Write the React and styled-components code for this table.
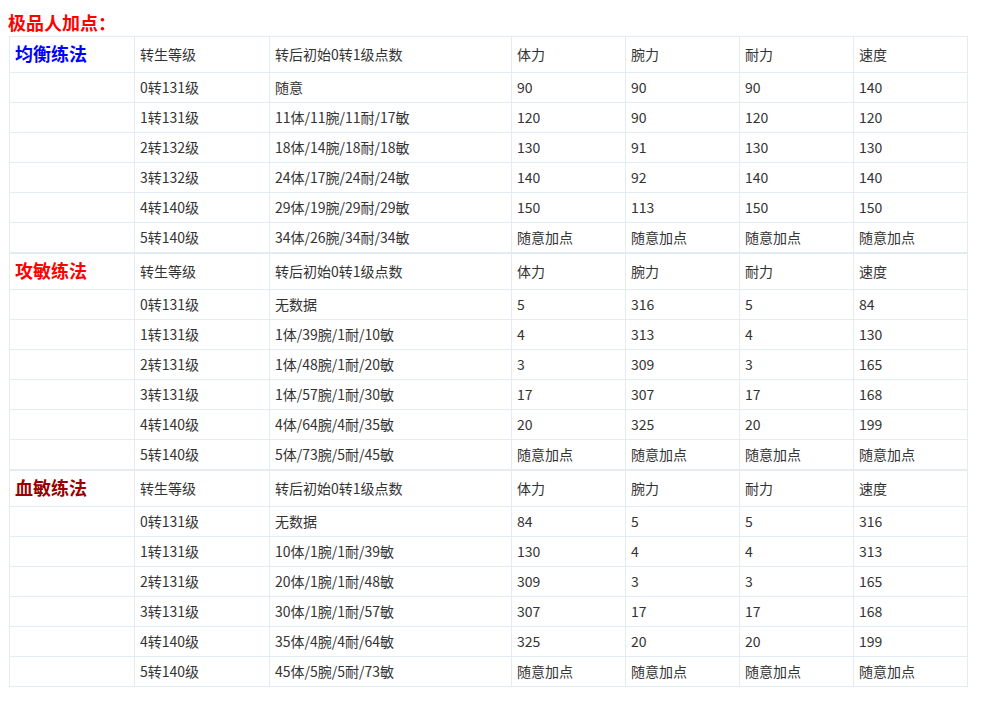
import React from 'react'
import styled, { createGlobalStyle } from 'styled-components'

const GlobalStyle = createGlobalStyle`
  body {
    margin: 8px;
    background: #ffffff;
    font-family: "Noto Sans CJK SC", "Microsoft YaHei", sans-serif;
    color: #333333;
  }
`

const Title = styled.h3`
  margin: 0;
  font-size: 18px;
  line-height: 28px;
  font-weight: bold;
  color: #ff0000;
`

const DataTable = styled.table`
  margin-left: 1px;
  width: 958px;
  border-collapse: collapse;
  table-layout: fixed;
  font-size: 14px;
`

const TR = styled.tr`
  td {
    height: ${props => (props.$head ? '33px' : '27px')};
    border: 1px solid #e3ebf3;
    border-top-width: ${props => (props.$first ? '2px' : '1px')};
    padding: 0 0 2px 5px;
    vertical-align: middle;
    white-space: nowrap;
    line-height: 20px;
  }
`

const Label = styled.span`
  font-size: 18px;
  font-weight: bold;
  color: ${props => props.$color};
`

const header = ['转生等级', '转后初始0转1级点数', '体力', '腕力', '耐力', '速度']
const any = ['随意加点', '随意加点', '随意加点', '随意加点']

const sections = [
  {
    name: '均衡练法',
    color: '#0000ff',
    rows: [
      ['0转131级', '随意', '90', '90', '90', '140'],
      ['1转131级', '11体/11腕/11耐/17敏', '120', '90', '120', '120'],
      ['2转132级', '18体/14腕/18耐/18敏', '130', '91', '130', '130'],
      ['3转132级', '24体/17腕/24耐/24敏', '140', '92', '140', '140'],
      ['4转140级', '29体/19腕/29耐/29敏', '150', '113', '150', '150'],
      ['5转140级', '34体/26腕/34耐/34敏', ...any],
    ],
  },
  {
    name: '攻敏练法',
    color: '#ff0000',
    rows: [
      ['0转131级', '无数据', '5', '316', '5', '84'],
      ['1转131级', '1体/39腕/1耐/10敏', '4', '313', '4', '130'],
      ['2转131级', '1体/48腕/1耐/20敏', '3', '309', '3', '165'],
      ['3转131级', '1体/57腕/1耐/30敏', '17', '307', '17', '168'],
      ['4转140级', '4体/64腕/4耐/35敏', '20', '325', '20', '199'],
      ['5转140级', '5体/73腕/5耐/45敏', ...any],
    ],
  },
  {
    name: '血敏练法',
    color: '#990000',
    rows: [
      ['0转131级', '无数据', '84', '5', '5', '316'],
      ['1转131级', '10体/1腕/1耐/39敏', '130', '4', '4', '313'],
      ['2转131级', '20体/1腕/1耐/48敏', '309', '3', '3', '165'],
      ['3转131级', '30体/1腕/1耐/57敏', '307', '17', '17', '168'],
      ['4转140级', '35体/4腕/4耐/64敏', '325', '20', '20', '199'],
      ['5转140级', '45体/5腕/5耐/73敏', ...any],
    ],
  },
]

const widths = [125, 135, 242, 114, 114, 114, 114]

export default function App() {
  return (
    <>
      <GlobalStyle />
      <Title>极品人加点：</Title>
      <DataTable>
        <colgroup>
          {widths.map((w, i) => <col key={i} style={{ width: w }} />)}
        </colgroup>
        {sections.map((s, si) => (
          <tbody key={s.name}>
            <TR $head $first={si > 0}>
              <td><Label $color={s.color}>{s.name}</Label></td>
              {header.map(h => <td key={h}>{h}</td>)}
            </TR>
            {s.rows.map((r, ri) => (
              <TR key={ri}>
                <td></td>
                {r.map((c, ci) => <td key={ci}>{c}</td>)}
              </TR>
            ))}
          </tbody>
        ))}
      </DataTable>
    </>
  )
}
